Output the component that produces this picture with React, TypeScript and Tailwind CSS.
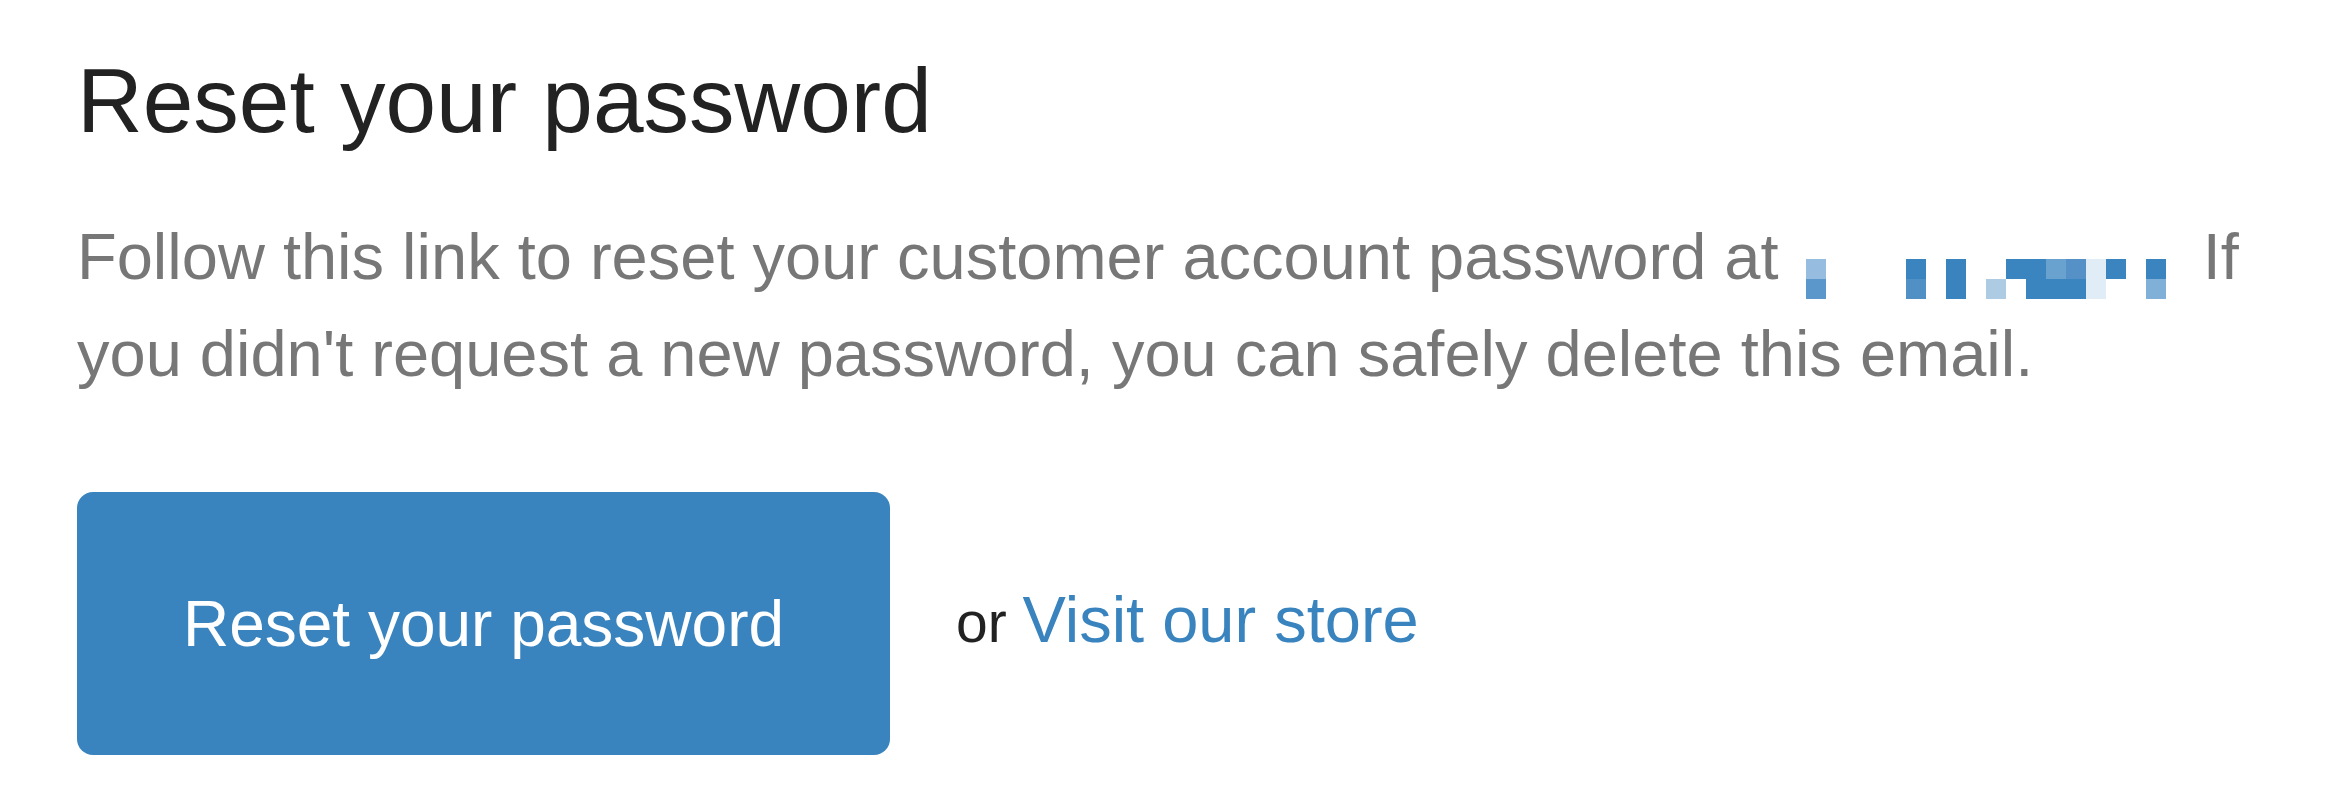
import React from "react";

const BLUE = "#3984bf";

// pixelated (redacted) store link: 18 columns x 2 rows of 20px cells
const ROW0: (string | null)[] = [
  "#96bddf", null, null, null, null, "#3a84bf", null, "#3983be", null, null,
  "#3a84bf", "#3a84bf", "#6aa2cf", "#5591c6", "#e0ecf6", "#3a84bf", null, "#3a84bf",
];
const ROW1: (string | null)[] = [
  "#5c97cb", null, null, null, null, "#5190c5", null, "#3983be", null, "#aecbe4",
  null, "#3a84bf", "#3a84bf", "#3a84bf", "#e0ecf6", null, null, "#80afd7",
];

function Redacted() {
  return (
    <span className="inline-flex flex-col align-baseline mb-[2px] ml-[9px] mr-[19px]">
      {[ROW0, ROW1].map((row, r) => (
        <span key={r} className="flex">
          {row.map((c, i) => (
            <span
              key={i}
              className="block w-[20px] h-[20px]"
              style={{ backgroundColor: c ?? "transparent" }}
            />
          ))}
        </span>
      ))}
    </span>
  );
}

export default function App() {
  return (
    <div
      className="min-h-[802px] w-full bg-white pl-[77px] pt-[55px]"
      style={{ fontFamily: '"Liberation Sans", Arial, Helvetica, sans-serif' }}
    >
      <h2 className="text-[91px] leading-none font-normal text-[#222222] m-0">
        Reset your password
      </h2>
      <p className="mt-[62px] text-[65px] leading-[97px] text-[#777777] whitespace-nowrap">
        Follow this link to reset your customer account password at <Redacted /> If
        <br />
        you didn't request a new password, you can safely delete this email.
      </p>
      <div className="mt-[90px] flex items-center">
        <a
          href="#"
          className="flex items-center justify-center w-[813px] h-[263px] rounded-[16px] text-white text-[64px] leading-[96px] no-underline"
          style={{ backgroundColor: BLUE }}
        >
          Reset your password
        </a>
        <div className="ml-[66px] pb-[6px] text-[65px] leading-[96px] whitespace-nowrap">
          <span className="text-[57px] text-[#222222]">or </span>
          <a href="#" className="no-underline" style={{ color: BLUE }}>
            Visit our store
          </a>
        </div>
      </div>
    </div>
  );
}
